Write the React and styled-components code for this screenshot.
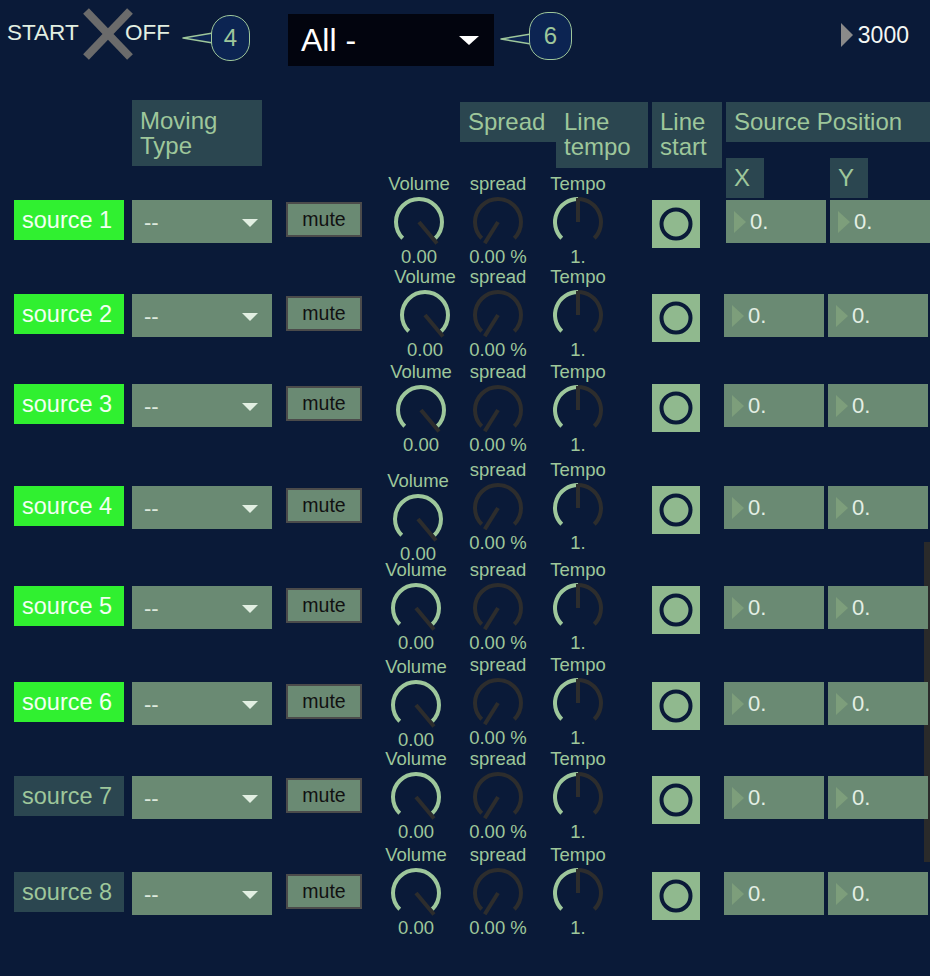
import React from 'react';
import styled, { createGlobalStyle } from 'styled-components';

const C = {
  bg: '#0a1a38',
  panel: '#2b4650',
  pale: '#9ec79b',
  field: '#6a8a73',
  toggle: '#90b98e',
  neon: '#30f030',
  dark: '#2d2d2d',
};

const Global = createGlobalStyle`
  html, body { margin: 0; padding: 0; background: ${C.bg}; }
  #root { width: 930px; }
`;

const Patch = styled.div`
  position: relative;
  width: 930px;
  height: 976px;
  overflow: hidden;
  background: ${C.bg};
  font-family: "Liberation Sans", Arial, Helvetica, sans-serif;
`;

/* ---------- top bar ---------- */
const TopBar = styled.div`
  display: flex;
  align-items: flex-start;
  height: 100px;
  padding: 0 21px 0 7px;
  box-sizing: border-box;
`;

const Caption = styled.span`
  flex: none;
  width: ${(p) => p.$w}px;
  margin-top: 20px;
  margin-left: ${(p) => p.$left || 0}px;
  font-size: 22.5px;
  line-height: 26px;
  color: #e2efe2;
  white-space: nowrap;
  position: relative;
`;

const XToggle = styled.svg`
  flex: none;
  margin-top: 8px;
  margin-left: 2px;
`;

const Callout = styled.div`
  flex: none;
  display: flex;
  align-items: center;
  margin-top: ${(p) => p.$top}px;
  margin-left: ${(p) => p.$left}px;
`;

const Tail = styled.svg`
  flex: none;
  margin-top: ${(p) => p.$shift || 0}px;
`;

const Bubble = styled.div`
  flex: none;
  position: relative;
  width: ${(p) => p.$w}px;
  height: ${(p) => p.$h}px;
  margin-left: -2px;
  box-sizing: border-box;
  border: 1.5px solid ${C.pale};
  border-radius: 19px;
  background: #0c2452;
  color: ${C.pale};
  font-size: 24px;
  display: flex;
  align-items: center;
  justify-content: center;
`;

const MenuBox = styled.div`
  flex: none;
  margin-top: 14px;
  margin-left: 38px;
  width: 206px;
  height: 52px;
  box-sizing: border-box;
  padding: 0 15px 0 13px;
  background: #02040e;
  color: #ffffff;
  font-size: 32px;
  display: flex;
  align-items: center;
  justify-content: space-between;
`;

const Readout = styled.div`
  margin-left: auto;
  margin-top: 22px;
  display: flex;
  align-items: center;
  gap: 5px;
  color: #f4f7f4;
  font-size: 23px;
  line-height: 26px;
`;

/* ---------- headers ---------- */
const HeadRow = styled.div`
  display: flex;
  align-items: flex-start;
  height: 100px;
  padding-left: 132px;
`;

const HeadBox = styled.div`
  flex: none;
  width: ${(p) => p.$w}px;
  height: ${(p) => p.$h || 40}px;
  margin-left: ${(p) => p.$ml || 0}px;
  margin-top: ${(p) => p.$mt || 0}px;
  padding: ${(p) => p.$pt || 7}px 0 0 8px;
  box-sizing: border-box;
  background: ${C.panel};
  color: ${C.pale};
  font-size: 24px;
  line-height: 25px;
  white-space: nowrap;
`;

const PosColumn = styled.div`
  flex: none;
  margin-left: 4px;
  margin-top: 2px;
  display: flex;
  flex-direction: column;
  gap: 16px;
`;

const AxisRow = styled.div`
  display: flex;
`;

/* ---------- source rows ---------- */
const Row = styled.div`
  display: flex;
  align-items: flex-start;
  height: ${(p) => p.$h}px;
  padding-left: 14px;
`;

const SourceTag = styled.div`
  flex: none;
  width: 110px;
  height: 40px;
  box-sizing: border-box;
  padding-left: 8px;
  display: flex;
  align-items: center;
  font-size: 23.5px;
  white-space: nowrap;
  background: ${(p) => (p.$on ? C.neon : C.panel)};
  color: ${(p) => (p.$on ? '#f2fff2' : C.pale)};
`;

const Select = styled.div`
  flex: none;
  margin-left: 8px;
  width: 140px;
  height: 43px;
  box-sizing: border-box;
  padding: 3px 14px 0 12px;
  background: ${C.field};
  color: #dde9dd;
  font-size: 22px;
  display: flex;
  align-items: center;
  justify-content: space-between;
`;

const Mute = styled.div`
  flex: none;
  margin-left: 14px;
  margin-top: 2px;
  width: 76px;
  height: 35px;
  box-sizing: border-box;
  border: 2px solid #4b4b4b;
  background: ${C.field};
  color: #111111;
  font-size: 19.5px;
  display: flex;
  align-items: center;
  justify-content: center;
`;

const KnobGroup = styled.div`
  flex: none;
  display: flex;
  align-items: flex-start;
  margin-left: 16px;
  margin-top: -26px;
`;

const KnobCell = styled.div`
  flex: none;
  width: 80px;
  display: flex;
  flex-direction: column;
  align-items: center;
  margin-top: ${(p) => p.$dy || 0}px;
  margin-left: ${(p) => p.$dx || 0}px;
  margin-right: ${(p) => -(p.$dx || 0)}px;
  color: ${C.pale};
  font-size: 18.5px;
  white-space: nowrap;
`;

const KnobLabel = styled.div`
  line-height: 20px;
`;

const KnobValue = styled.div`
  line-height: 16px;
`;

const Dial = styled.svg`
  display: block;
  margin-top: 1px;
`;

const LineToggle = styled.div`
  flex: none;
  margin-left: 34px;
  width: 48px;
  height: 48px;
  background: ${C.toggle};
  display: flex;
  align-items: center;
  justify-content: center;
`;

const NumBox = styled.div`
  flex: none;
  position: relative;
  margin-left: ${(p) => p.$ml}px;
  width: 100px;
  height: 43px;
  box-sizing: border-box;
  padding-left: 8px;
  background: ${C.field};
  color: #e4efe4;
  font-size: 22px;
  display: flex;
  align-items: center;
  gap: 4px;
`;

const ScrollTrack = styled.div`
  position: absolute;
  left: 924px;
  top: 542px;
  width: 6px;
  height: 320px;
  background: #2a2a2a;
`;

/* ---------- drawings ---------- */
const polar = (cx, cy, r, deg) => {
  const a = ((deg - 90) * Math.PI) / 180;
  return [cx + r * Math.cos(a), cy + r * Math.sin(a)];
};
const arc = (cx, cy, r, a0, a1) => {
  const [x0, y0] = polar(cx, cy, r, a0);
  const [x1, y1] = polar(cx, cy, r, a1);
  const large = a1 - a0 > 180 ? 1 : 0;
  return `M${x0.toFixed(2)} ${y0.toFixed(2)} A${r} ${r} 0 ${large} 1 ${x1.toFixed(2)} ${y1.toFixed(2)}`;
};

function KnobDrawing({ kind }) {
  const c = 27;
  const r = 23;
  let split = 135;
  let needle = 140;
  let len = 28;
  if (kind === 'spread') {
    split = -135;
    needle = -148;
    len = 25;
  }
  if (kind === 'tempo') {
    split = 0;
    needle = 0;
    len = 24;
  }
  const [nx, ny] = polar(c, c, len, needle);
  return (
    <Dial width="54" height="54" viewBox="0 0 54 54">
      {split > -135 && <path d={arc(c, c, r, -135, split)} fill="none" stroke={C.pale} strokeWidth="4" />}
      {split < 135 && <path d={arc(c, c, r, split, 135)} fill="none" stroke={C.dark} strokeWidth="4" />}
      <line x1={c} y1={c} x2={nx} y2={ny} stroke={C.dark} strokeWidth="4" />
    </Dial>
  );
}

function Knob({ label, value, kind, dx, dy }) {
  return (
    <KnobCell $dx={dx} $dy={dy}>
      <KnobLabel>{label}</KnobLabel>
      <KnobDrawing kind={kind} />
      <KnobValue>{value}</KnobValue>
    </KnobCell>
  );
}

const DownArrow = ({ w, h, color }) => (
  <svg width={w} height={h} viewBox={`0 0 ${w} ${h}`}>
    <polygon points={`0,0 ${w},0 ${w / 2},${h}`} fill={color} />
  </svg>
);

const RightArrow = ({ w, h, color }) => (
  <svg width={w} height={h} viewBox={`0 0 ${w} ${h}`} style={{ flex: 'none' }}>
    <polygon points={`0,0 ${w},${h / 2} 0,${h}`} fill={color} />
  </svg>
);

function Note({ n, top, left, w, h, tailShift }) {
  return (
    <Callout $top={top} $left={left}>
      <Tail width="31" height="14" viewBox="0 0 31 14" $shift={tailShift}>
        <polygon points="1,7 31,2 31,12" fill="#0c2452" stroke={C.pale} strokeWidth="1.5" strokeLinejoin="round" />
      </Tail>
      <Bubble $w={w} $h={h}>{n}</Bubble>
    </Callout>
  );
}

const rows = [
  { name: 'source 1', on: true, h: 94, vol: [1, 0], sp: 0, shift: 0 },
  { name: 'source 2', on: true, h: 90, vol: [7, -1], sp: -1, shift: -2 },
  { name: 'source 3', on: true, h: 102, vol: [3, 4], sp: 4, shift: -2 },
  { name: 'source 4', on: true, h: 100, vol: [0, 11], sp: 0, shift: -2 },
  { name: 'source 5', on: true, h: 96, vol: [-2, 0], sp: 0, shift: -2 },
  { name: 'source 6', on: true, h: 94, vol: [-2, 1], sp: -1, shift: -2 },
  { name: 'source 7', on: false, h: 96, vol: [-2, -1], sp: -1, shift: -2 },
  { name: 'source 8', on: false, h: 104, vol: [-2, -1], sp: -1, shift: -2 },
];

export default function App() {
  return (
    <Patch>
      <Global />
      <ScrollTrack />
      <TopBar>
        <Caption $w={74}>START</Caption>
        <XToggle width="50" height="52" viewBox="0 0 50 52">
          <line x1="3" y1="3" x2="47" y2="49" stroke="#6b6b6b" strokeWidth="8" />
          <line x1="47" y1="3" x2="3" y2="49" stroke="#6b6b6b" strokeWidth="8" />
        </XToggle>
        <Caption $w={44} $left={-8}>OFF</Caption>
        <Note n="4" top={15} left={13} w={39} h={46} tailShift={0} />
        <MenuBox>
          <span>All -</span>
          <DownArrow w={20} h={9} color="#ffffff" />
        </MenuBox>
        <Note n="6" top={12} left={6} w={43} h={48} tailShift={6} />
        <Readout>
          <RightArrow w={12} h={24} color="#8a8a8a" />
          <span>3000</span>
        </Readout>
      </TopBar>

      <HeadRow>
        <HeadBox $w={130} $h={66} $pt={8}>Moving<br />Type</HeadBox>
        <HeadBox $w={96} $ml={198} $mt={2}>Spread</HeadBox>
        <HeadBox $w={92} $h={66} $mt={2}>Line<br />tempo</HeadBox>
        <HeadBox $w={70} $h={66} $ml={4} $mt={2}>Line<br />start</HeadBox>
        <PosColumn>
          <HeadBox $w={210}>Source Position</HeadBox>
          <AxisRow>
            <HeadBox $w={38}>X</HeadBox>
            <HeadBox $w={38} $ml={66}>Y</HeadBox>
          </AxisRow>
        </PosColumn>
      </HeadRow>

      {rows.map((r) => (
        <Row key={r.name} $h={r.h}>
          <SourceTag $on={r.on}>{r.name}</SourceTag>
          <Select>
            <span>--</span>
            <DownArrow w={16} h={8} color="#e2efe2" />
          </Select>
          <Mute>mute</Mute>
          <KnobGroup>
            <Knob label="Volume" value="0.00" kind="volume" dx={r.vol[0]} dy={r.vol[1]} />
            <Knob label="spread" value="0.00 %" kind="spread" dy={r.sp} />
            <Knob label="Tempo" value="1." kind="tempo" dy={r.sp} />
          </KnobGroup>
          <LineToggle>
            <svg width="34" height="34" viewBox="0 0 34 34">
              <circle cx="17" cy="17" r="14.5" fill="none" stroke={C.bg} strokeWidth="4" />
            </svg>
          </LineToggle>
          <NumBox $ml={26 + r.shift}>
            <RightArrow w={12} h={22} color="#7d9e7b" />
            <span>0.</span>
          </NumBox>
          <NumBox $ml={4}>
            <RightArrow w={12} h={22} color="#7d9e7b" />
            <span>0.</span>
          </NumBox>
        </Row>
      ))}
    </Patch>
  );
}
